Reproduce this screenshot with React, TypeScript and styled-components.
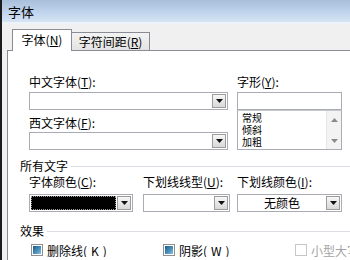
import React from "react";
import styled, { createGlobalStyle } from "styled-components";

const GlobalStyle = createGlobalStyle`
  html, body {
    margin: 0;
    padding: 0;
    background: #f0f0f0;
  }
  body {
    font-family: "Noto Sans CJK SC", "Noto Sans", sans-serif;
    font-size: 12px;
    color: #000;
  }
  * { box-sizing: border-box; }
`;

const Window = styled.div`
  width: 350px;
  height: 260px;
  overflow: hidden;
  display: flex;
  flex-direction: column;
  background: #f0f0f0;
  border-left: 2px solid #1c1c1c;
`;

const TitleBar = styled.div`
  height: 24px;
  display: flex;
  align-items: center;
  padding-left: 6px;
  font-size: 13px;
  background: linear-gradient(#a8bfdb, #bfd4ec 55%, #d6e4f4);
  border-bottom: 2px solid #eef3f9;
`;

const Body = styled.div`
  flex: 1;
  display: flex;
  flex-direction: column;
  padding: 5px 0 0 5px;
`;

const TabStrip = styled.div`
  display: flex;
  align-items: flex-end;
  height: 22px;
  padding-left: 5px;
  margin-bottom: -1px;
  position: relative;
  z-index: 1;
`;

const Tab = styled.div<{ $active?: boolean; $w: number }>`
  width: ${(p) => p.$w}px;
  height: ${(p) => (p.$active ? 22 : 19)}px;
  display: flex;
  align-items: center;
  justify-content: center;
  line-height: 14px;
  border: 1px solid #898c95;
  border-bottom: ${(p) => (p.$active ? "none" : "1px solid #898c95")};
  border-left: ${(p) => (p.$active ? "1px solid #898c95" : "none")};
  background: ${(p) => (p.$active ? "#fff" : "linear-gradient(#f3f3f3, #e3e3e3)")};
  padding-bottom: ${(p) => (p.$active ? 1 : 0)}px;
`;

const Panel = styled.div`
  flex: 1;
  background: #fff;
  border-top: 1px solid #898c95;
  border-left: 1px solid #898c95;
  padding: 24px 0 0 12px;
`;

const Indent = styled.div`
  padding-left: 9px;
`;

const TopGrid = styled.div`
  display: grid;
  grid-template-columns: 199px 105px;
  column-gap: 9px;
`;

const Column = styled.div`
  display: flex;
  flex-direction: column;
`;

const Label = styled.div<{ $mt?: number }>`
  height: 14px;
  line-height: 14px;
  margin-top: ${(p) => p.$mt ?? 0}px;
  margin-bottom: ${(p) => (p.$mt === undefined ? 3 : 2)}px;
  white-space: nowrap;
`;

const Combo = styled.div<{ $w?: number }>`
  width: ${(p) => (p.$w ? `${p.$w}px` : "100%")};
  height: 18px;
  display: flex;
  align-items: stretch;
  border: 1px solid #a9acb4;
  background: #fff;
  padding: 1px;
`;

const ComboValue = styled.div<{ $swatch?: string }>`
  flex: 1;
  display: flex;
  align-items: center;
  justify-content: center;
  line-height: 14px;
  background: ${(p) => p.$swatch ?? "transparent"};
  border: ${(p) => (p.$swatch ? "1px dotted #9a9a9a" : "none")};
  margin-right: 1px;
`;

const DropButton = styled.div`
  width: 14px;
  height: 14px;
  display: flex;
  align-items: center;
  justify-content: center;
  border: 1px solid #9c9c9c;
  background: linear-gradient(#f7f7f7, #d8d8d8);
`;

const TextBox = styled.div`
  height: 18px;
  border: 1px solid #a9acb4;
  background: #fff;
`;

const StyleList = styled.div`
  height: 40px;
  display: flex;
  border: 1px solid #a9acb4;
  border-top: 1px solid #c6c8cc;
  background: #fff;
`;

const StyleItems = styled.div`
  flex: 1;
  padding: 1px 0 0 4px;
  font-size: 10px;
  line-height: 12px;
`;

const ScrollBar = styled.div`
  width: 15px;
  display: flex;
  flex-direction: column;
  justify-content: space-between;
  align-items: center;
  padding: 7px 0 6px;
  background: #f3f3f3;
  border-left: 1px solid #e6e6e6;
`;

const GroupHeader = styled.div<{ $mt: number }>`
  display: flex;
  align-items: center;
  gap: 3px;
  height: 14px;
  line-height: 14px;
  margin-top: ${(p) => p.$mt}px;

  &::after {
    content: "";
    flex: 1;
    height: 1px;
    background: #dadde2;
  }
`;

const FieldRow = styled.div`
  display: grid;
  grid-template-columns: 114px 94px 105px;
  margin-top: 2px;
`;

const CheckRow = styled.div`
  display: grid;
  grid-template-columns: 132px 132px auto;
  padding-left: 2px;
  margin-top: 5px;
  height: 14px;
`;

const CheckItem = styled.div<{ $disabled?: boolean }>`
  display: flex;
  align-items: center;
  gap: 4px;
  white-space: nowrap;
  overflow: hidden;
  color: ${(p) => (p.$disabled ? "#a3a3a3" : "#000")};
`;

const CheckBox = styled.div<{ $disabled?: boolean }>`
  flex: none;
  width: 12px;
  height: 12px;
  padding: 1px;
  border: 1px solid ${(p) => (p.$disabled ? "#c7c7c7" : "#8e8f8f")};
  background: #fff;

  &::after {
    content: "";
    display: ${(p) => (p.$disabled ? "none" : "block")};
    width: 100%;
    height: 100%;
    background: linear-gradient(135deg, #1d5a86, #4f93bf 60%, #8cc3e2);
  }
`;

const ScrollArrow = ({ up }: { up?: boolean }) => (
  <svg width="7" height="4" viewBox="0 0 7 4">
    <path d={up ? "M0 4 L3.5 0 L7 4 Z" : "M0 0 L7 0 L3.5 4 Z"} fill="#8a8a8a" />
  </svg>
);

const DownGlyph = () => (
  <svg width="7" height="4" viewBox="0 0 7 4">
    <path d="M0 0 L7 0 L3.5 4 Z" fill="#111" />
  </svg>
);

const ComboBox = ({ w, value, swatch }: { w?: number; value?: string; swatch?: string }) => (
  <Combo $w={w}>
    <ComboValue $swatch={swatch}>{value}</ComboValue>
    <DropButton>
      <DownGlyph />
    </DropButton>
  </Combo>
);

const App = () => {
  return (
    <>
      <GlobalStyle />
      <Window>
        <TitleBar>字体</TitleBar>
        <Body>
          <TabStrip>
            <Tab $active $w={60}>
              字体(<u>N</u>)
            </Tab>
            <Tab $w={78}>
              字符间距(<u>R</u>)
            </Tab>
          </TabStrip>
          <Panel>
            <Indent>
              <TopGrid>
                <Column>
                  <Label>
                    中文字体(<u>T</u>):
                  </Label>
                  <ComboBox />
                  <Label $mt={6}>
                    西文字体(<u>F</u>):
                  </Label>
                  <ComboBox />
                </Column>
                <Column>
                  <Label>
                    字形(<u>Y</u>):
                  </Label>
                  <TextBox />
                  <StyleList>
                    <StyleItems>
                      <div>常规</div>
                      <div>倾斜</div>
                      <div>加粗</div>
                    </StyleItems>
                    <ScrollBar>
                      <ScrollArrow up />
                      <ScrollArrow />
                    </ScrollBar>
                  </StyleList>
                </Column>
              </TopGrid>
            </Indent>

            <GroupHeader $mt={9}>所有文字</GroupHeader>
            <Indent>
              <FieldRow>
                <Label>
                  字体颜色(<u>C</u>):
                </Label>
                <Label>
                  下划线线型(<u>U</u>):
                </Label>
                <Label>
                  下划线颜色(<u>I</u>):
                </Label>
              </FieldRow>
              <FieldRow>
                <ComboBox w={104} swatch="#000" />
                <ComboBox w={87} />
                <ComboBox w={105} value="无颜色" />
              </FieldRow>
            </Indent>

            <GroupHeader $mt={12}>效果</GroupHeader>
            <Indent>
              <CheckRow>
                <CheckItem>
                  <CheckBox />
                  删除线(<u>K</u>)
                </CheckItem>
                <CheckItem>
                  <CheckBox />
                  阴影(<u>W</u>)
                </CheckItem>
                <CheckItem $disabled>
                  <CheckBox $disabled />
                  小型大写
                </CheckItem>
              </CheckRow>
            </Indent>
          </Panel>
        </Body>
      </Window>
    </>
  );
};

export default App;
